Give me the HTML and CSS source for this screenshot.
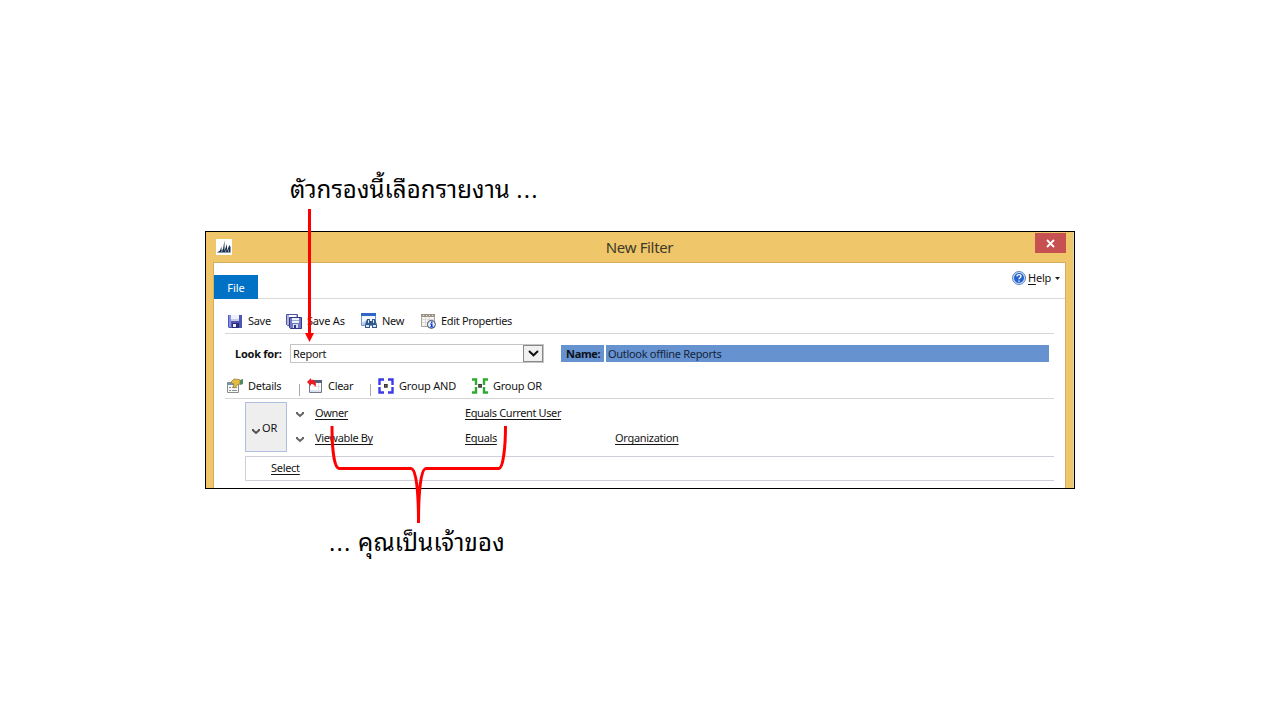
FILE: index.html
```html
<!DOCTYPE html>
<html lang="th">
<head>
<meta charset="utf-8">
<title>New Filter</title>
<link rel="stylesheet" href="styles.css">
</head>
<body>
<main class="slide">
  <p class="caption caption-top">ตัวกรองนี้เลือกรายงาน <span class="dots">...</span></p>
  <section class="window" lang="en">
    <header class="titlebar">
      <svg class="app-icon" width="16" height="16" viewBox="0 0 16 16"><path fill="#fff" d="M0 0h16v16H0z"/><path fill="#172f50" d="M1 13.500l3-2L5.500 7.500v4L7 10l1.500-8.500v10L11 5v6.500L13.500 6l1 2v5.500z"/><path stroke="#fff" stroke-width=".5" d="M5.600 13l.8-2M9.500 13l.6-2.500M12.500 13v-2.500"/></svg>
      <h1 class="title">New Filter</h1>
      <span class="close"><svg width="9" height="9" viewBox="0 0 9 9"><path d="M1 1l7 7M8 1L1 8" stroke="#fff" stroke-width="1.800"/></svg></span>
    </header>
    <div class="client">
      <nav class="tabs">
        <span class="tab">File</span>
        <span class="help">
          <svg width="14" height="14" viewBox="0 0 14 14"><circle cx="7" cy="7" r="6.500" fill="#c9dcf5" stroke="#5d84c4"/><circle cx="7" cy="7" r="5" fill="#2463cc"/><path d="M5 5.600c0-2.600 4-2.500 4-.3C9 6.800 7 6.700 7 8.300M7 9.400v1.300" fill="none" stroke="#fff" stroke-width="1.400"/></svg>
          <span class="help-text"><u>H</u>elp</span>
          <svg width="5" height="3" viewBox="0 0 5 3"><path d="M0 0h5L2.500 3z" fill="#222"/></svg>
        </span>
      </nav>
      <div class="toolbar">
        <svg class="icon i-save" width="15" height="15" viewBox="0 0 15 15"><path fill="#5156b5" d="M0 1h14v13H1L0 13z"/><path fill="#8990dd" d="M1 1h2v12H1z"/><path fill="#edf1fb" d="M3 1h8v6H3z"/><path fill="#c3cce9" d="M3 5h8v2H3z"/><path fill="#292e78" d="M4 9h7v5H4z"/><path fill="#eef" d="M5 10h3v3H5z"/></svg>
        <span class="label w-save">Save</span>
        <svg class="icon i-saveas" width="17" height="17" viewBox="0 0 17 17"><path fill="#aeb3df" stroke="#50579f" d="M.5 1.500h11v11h-10l-1-1z"/><path fill="#fff" d="M3 2h7v2H3z"/><path fill="#6f76c8" stroke="#333980" d="M3.500 4.500h12v11h-11l-1-1z"/><path fill="#edf1fb" d="M6 5h7v5H6z"/><path fill="#9eacd3" d="M6 7h7v1H6z"/><path fill="#d8def1" d="M7 11h5v4H7z"/><path fill="#30377b" d="M8 12h2v3H8z"/></svg>
        <span class="label w-saveas">Save As</span>
        <svg class="icon i-new" width="17" height="16" viewBox="0 0 17 16"><path fill="#f4f8ff" stroke="#7297d4" d="M.5 1.500h14v11H.5z"/><path fill="#2f67c8" d="M0 0h15v3H0z"/><path fill="#b9cdec" d="M1 10l5-3v5H1z"/><path fill="#335a8c" d="M6 6h3v2h2V6h3l2 6v3h-5v-3H9v3H4v-3z"/><path fill="#d6e4f5" d="M5 12h3v2H5zM12 12h3v2h-3zM7 7h1v3H7zM12 7h1v3h-1z"/></svg>
        <span class="label w-new">New</span>
        <svg class="icon i-edit" width="15" height="15" viewBox="0 0 15 15"><path fill="#f6f4f1" stroke="#aaa69f" d="M.5 1.500h13v11H.5z"/><path fill="#9b9288" d="M0 0h14v3H0z"/><path fill="#e8e2d8" d="M2 1h1v1H2zM5 1h1v1H5zM8 1h1v1H8zM11 1h1v1h-1z"/><path stroke="#dedbd5" d="M1 5.500h12M1 8.500h12M4.500 3v9M8.500 3v9"/><circle cx="10.400" cy="10.400" r="4" fill="#e7f0fd" stroke="#454c5c"/><path fill="#1735db" d="M10 7.500h1.500V9H10zM9 9.500h2.500v3h1v1H9v-1h1v-2H9z"/></svg>
        <span class="label w-edit">Edit Properties</span>
      </div>
      <div class="lookup">
        <b class="look-label">Look for:</b>
        <div class="combo"><span class="combo-text">Report</span><span class="combo-btn"><svg width="11" height="7" viewBox="0 0 11 7"><path d="M1 1l4.500 4.300L10 1" fill="none" stroke="#111" stroke-width="2"/></svg></span></div>
        <b class="name-label">Name:</b>
        <div class="name-field">Outlook offline Reports</div>
      </div>
      <div class="toolbar toolbar-query">
        <svg class="icon i-details" width="16" height="16" viewBox="0 0 16 16"><path fill="#f8f7f1" stroke="#8b8d8c" d="M.5 4.500h11v10H.5z"/><path fill="#6f91bd" d="M1 5h8v2H1z"/><path stroke="#8694a4" d="M2 9.500h2M5 9.500h5M2 12.500h2M5 12.500h5"/><path fill="#e2bd43" stroke="#92752d" stroke-width=".7" d="M4 4l3-3 5 .5L13 2v4l-3 1-2 3-2-1 1-3-2-.5z"/><path fill="#4d8a66" d="M13 2l3-1v5l-3 1z"/></svg>
        <span class="label w-details">Details</span>
        <i class="divider"></i>
        <svg class="icon i-clear" width="16" height="16" viewBox="0 0 16 16"><path fill="#fff" stroke="#71788a" d="M2.500 3.500h12v11h-12z"/><path fill="#d8e1ef" d="M3 12h11v2H3z"/><path fill="#5a6079" d="M7 2h8v3H7z"/><path stroke="#eadfe0" d="M5.500 8.500h8M11.500 5v9"/><path fill="#ec1c24" d="M0 4l4-4v2c3-1 5 1 5 5L8 9C8 7 6 6 4 6v2z"/></svg>
        <span class="label w-clear">Clear</span>
        <i class="divider divider-b"></i>
        <svg class="icon i-and" width="16" height="16" viewBox="0 0 16 16" fill="none"><path d="M6 1.500H1.500V7M1.500 9v5.500H6M10 1.500h4.500V7M14.500 9v5.500H10" stroke="#3b3be8" stroke-width="2.400"/><path stroke="#333" stroke-width="1.400" d="M6.700 6.700h2.300v2.300H6.700z"/></svg>
        <span class="label w-and">Group AND</span>
        <svg class="icon i-or" width="16" height="16" viewBox="0 0 16 16" fill="none"><path d="M0 1.500h4V7M4 9v5.500H0M16 1.500h-4V7M12 9v5.500h4" stroke="#2faa2f" stroke-width="2.400"/><path stroke="#333" stroke-width="1.400" d="M6.900 6.700h2.300v2.300H6.900z"/></svg>
        <span class="label w-or">Group OR</span>
      </div>
      <div class="criteria">
        <div class="or-box"><svg class="chev" width="8" height="7" viewBox="0 0 8 7"><path d="M1 1v1.300L4 5l3-2.700V1" fill="none" stroke="#555" stroke-width="2"/></svg><span>OR</span></div>
        <div class="rows">
          <div class="row"><svg width="8" height="7" viewBox="0 0 8 7"><path d="M1 1v1.300L4 5l3-2.700V1" fill="none" stroke="#666" stroke-width="2"/></svg><span class="link l-owner">Owner</span><span class="link l-ecu">Equals Current User</span></div>
          <div class="row"><svg width="8" height="7" viewBox="0 0 8 7"><path d="M1 1v1.300L4 5l3-2.700V1" fill="none" stroke="#666" stroke-width="2"/></svg><span class="link l-view">Viewable By</span><span class="link l-eq">Equals</span><span class="link l-org">Organization</span></div>
        </div>
      </div>
      <div class="select-row"><span class="link l-select">Select</span></div>
    </div>
  </section>
  <p class="caption caption-bottom"><span class="dots">...</span> คุณเป็นเจ้าของ</p>
  <svg class="annotations" width="1280" height="720" viewBox="0 0 1280 720" fill="none" stroke="#f00" stroke-width="3">
    <path d="M309.500 209v126"/>
    <path d="M305 333h9l-4.500 9z" fill="#f00" stroke="none"/>
    <path d="M332 426C332 448 334 468 339 468.500H411C416 468.500 418.500 490 418.500 523C418.500 490 421 468.500 426 468.500H499C503 468 505.500 448 505.500 426"/>
  </svg>
</main>
</body>
</html>
```

FILE: styles.css
```css
* { box-sizing: border-box; }
body { margin: 0; background: #fff; }
.slide {
  position: relative;
  width: 1280px;
  height: 720px;
  padding: 167px 205px 0;
  overflow: hidden;
  font-family: "Noto Sans", "Open Sans", sans-serif;
  font-size: 11px;
  color: #151515;
}
.caption {
  margin: 0;
  color: #000;
  font-family: "Noto Sans Thai Looped", "Leelawadee UI", Tahoma, Loma, Waree, Garuda, "Noto Sans Thai", "Noto Sans", sans-serif;
  font-size: 24px;
  line-height: 40px;
  letter-spacing: .1px;
  white-space: nowrap;
}
.dots { font-family: "Open Sans", sans-serif; font-weight: 400; letter-spacing: 1.200px; }
.caption-top { height: 64px; padding-left: 85px; }
.caption-bottom { padding: 31px 0 0 124px; letter-spacing: .2px; }
.caption-bottom .dots { letter-spacing: 1.200px; }
.annotations { position: absolute; left: 0; top: 0; pointer-events: none; }

.window {
  width: 870px;
  height: 258px;
  border: 1px solid #000;
  background: #efc66a;
  box-shadow: inset -1px 0 #e0d3b2;
  overflow: hidden;
}
.titlebar {
  display: flex;
  align-items: flex-start;
  height: 30px;
  padding: 1px 8px 0 10px;
}
.app-icon { margin-top: 6px; }
.title {
  flex: 1;
  margin: 0;
  padding-left: 12px;
  text-align: center;
  font-size: 15px;
  line-height: 29px;
  font-weight: 400;
  letter-spacing: -.35px;
  color: #403a28;
}
.close {
  display: flex;
  align-items: center;
  justify-content: center;
  width: 31px;
  height: 20px;
  background: #c75050;
}
.client {
  width: 853px;
  height: 227px;
  margin-left: 7px;
  border: 1px solid #d4ae5c;
  border-bottom: 0;
  background: #fff;
}
.tabs {
  display: flex;
  justify-content: space-between;
  align-items: flex-end;
  height: 36px;
  border-bottom: 1px solid #d9d9d9;
}
.tab {
  width: 44px;
  height: 24px;
  margin-bottom: -1px;
  background: #0072c6;
  color: #fff;
  text-align: center;
  line-height: 26px;
}
.help { display: flex; align-items: center; height: 18px; margin: 0 5px 11px 0; }
.help-text { width: 27px; margin: -1px 0 0 2px; white-space: nowrap; letter-spacing: -.2px; }
.help u { text-underline-offset: 2px; }

.toolbar {
  display: flex;
  align-items: center;
  height: 35px;
  margin: 0 11px;
  padding: 10px 0 0 3px;
  border-bottom: 1px solid #d6d6d6;
}
.icon { flex: none; }
.label, .link { flex: none; white-space: nowrap; line-height: 16px; }
.label { margin-left: 5px; letter-spacing: -.3px; }
.w-save { width: 23px; }
.i-saveas { margin-left: 15px; }
.w-saveas { width: 38px; margin-left: 4px; letter-spacing: -.2px; }
.i-new { margin-left: 16px; }
.w-new { width: 23px; margin-left: 4px; }
.i-edit { margin-left: 16px; }
.w-edit { letter-spacing: -.33px; }

.lookup { display: flex; height: 38px; padding: 10px 0 0 21px; line-height: 20px; }
.look-label { width: 55px; color: #111; letter-spacing: -.25px; white-space: nowrap; }
.combo { display: flex; justify-content: space-between; width: 254px; height: 19px; border: 1px solid #c5c5c5; line-height: 18px; }
.combo-text { padding-left: 2px; letter-spacing: -.3px; }
.combo-btn {
  display: flex;
  align-items: center;
  justify-content: center;
  width: 20px;
  height: 17px;
  border: 1px solid #888;
  background: #f0f0f0;
}
.name-label, .name-field { height: 17px; margin-top: 1px; background: #6692d0; line-height: 18px; white-space: nowrap; }
.name-label { width: 43px; margin-left: 17px; padding-left: 5px; color: #0b101a; letter-spacing: -.3px; }
.name-field { width: 443px; margin-left: 2px; padding-left: 2px; color: #14243c; letter-spacing: -.3px; }

.toolbar-query { height: 27px; padding: 1px 0 0 2px; }
.w-details { width: 34px; }
.divider { width: 1px; height: 12px; margin: 9px 0 0 17px; background: #aaa; }
.i-clear { margin-left: 7px; }
.w-clear { width: 27px; }
.divider-b { margin-left: 15px; }
.i-and { margin-left: 7px; }
.w-and { width: 57px; letter-spacing: -.2px; }
.i-or { margin-left: 16px; }
.w-or { letter-spacing: -.25px; }

.criteria { display: flex; height: 57px; padding: 3px 0 0 31px; }
.or-box {
  display: flex;
  align-items: center;
  width: 42px;
  height: 50px;
  padding-left: 6px;
  border: 1px solid #b0bfdd;
  background: #eee;
}
.or-box .chev { margin: 8px 2px 0 0; }
.rows { padding-left: 9px; }
.row { display: flex; align-items: center; height: 25px; padding-bottom: 4px; }
.link {
  letter-spacing: -.35px;
  text-decoration: underline;
  text-underline-offset: 2px;
  text-decoration-skip-ink: none;
}
.row .link { width: 150px; }
.row svg { margin: 3px 11px 0 0; }
.row .l-ecu { letter-spacing: -.38px; }
.row .l-org { letter-spacing: -.3px; }
.select-row .l-select { letter-spacing: -.3px; }
.select-row {
  height: 25px;
  margin: 0 11px 0 31px;
  padding: 3px 0 0 25px;
  border: 1px solid #cfcfda;
  border-right: 0;
}
```
